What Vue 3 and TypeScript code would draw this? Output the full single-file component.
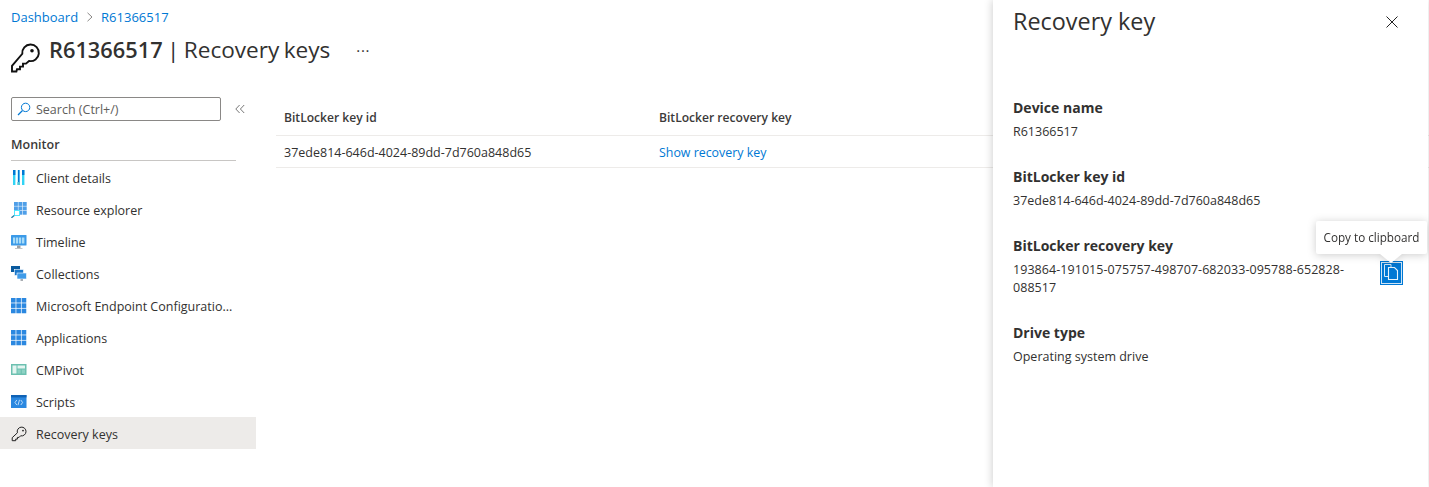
<script setup lang="ts">
const nav: { label: string; icon: string }[] = [
  { label: 'Client details', icon: 'bars' },
  { label: 'Resource explorer', icon: 'explorer' },
  { label: 'Timeline', icon: 'timeline' },
  { label: 'Collections', icon: 'collections' },
  { label: 'Microsoft Endpoint Configuratio...', icon: 'grid' },
  { label: 'Applications', icon: 'grid' },
  { label: 'CMPivot', icon: 'pivot' },
  { label: 'Scripts', icon: 'scripts' },
  { label: 'Recovery keys', icon: 'key' }
]
const gridCells = [0, 5.33, 10.66].flatMap((y) => [0, 5.33, 10.66].map((x) => ({ x, y })))
const explorerCells = [0, 4.4, 8.8].flatMap((y) => [3, 7.4, 11.8].map((x) => ({ x, y })))
</script>

<template>
  <div class="page">
    <header class="head">
      <nav class="crumbs">
        <a>Dashboard</a>
        <svg class="chev" width="8" height="10" viewBox="0 0 8 10"><path d="M1.5 .8 6 5 1.5 9.2" fill="none" stroke="#8a8886" stroke-width="1" /></svg>
        <a>R61366517</a>
      </nav>
      <div class="title-row">
        <svg class="title-key" width="30" height="30" viewBox="0 0 30 30">
          <path d="M11.3 10.8A8.3 8.3 0 1 1 18 18l-3 2.6h-3v3H9v2.6H6l-.6 2.3H1v-5.6z" fill="none" stroke="#111" stroke-width="1.9" />
          <circle cx="21" cy="7.8" r="1.8" fill="#111" />
        </svg>
        <h1><b>R61366517</b> | Recovery keys</h1>
        <span class="more">···</span>
      </div>
    </header>

    <div class="body">
      <aside class="side">
        <div class="search-row">
          <div class="search">
            <svg width="14" height="14" viewBox="0 0 14 14"><circle cx="8.6" cy="5.4" r="4.2" fill="none" stroke="#0078d4" /><path d="M5.5 8.5 1 13" stroke="#0078d4" stroke-width="1.2" /></svg>
            <span>Search (Ctrl+/)</span>
          </div>
          <svg class="collapse" width="10" height="10" viewBox="0 0 10 10"><path d="M4.6 1 .8 5l3.8 4M9.2 1 5.4 5l3.8 4" fill="none" stroke="#777" /></svg>
        </div>
        <div class="group">Monitor</div>
        <ul class="menu">
          <li v-for="item in nav" :key="item.label" :class="{ active: item.icon === 'key' }">
            <svg class="nav-icon" width="16" height="16" viewBox="0 0 16 16">
              <template v-if="item.icon === 'bars'">
                <path d="M2 0h2.4v15H2zM11 0h2.4v15H11z" fill="#32d4f5" />
                <path d="M2 0h2.4v5H2zM11 0h2.4v5H11z" fill="#0078d4" />
                <path d="M6.4 0h2.6v15H6.4z" fill="#9cebff" />
                <path d="M7 0h1.5v12H7z" fill="#0078d4" />
                <path d="M6.4 12H9v3H6.4z" fill="#50c8d8" />
              </template>
              <template v-else-if="item.icon === 'explorer'">
                <rect v-for="(c, i) in explorerCells" :key="i" :x="c.x" :y="c.y" width="3.9" height="3.9" fill="#4f9fe8" />
                <rect x="3.5" y="8.5" width="5" height="5" fill="#fff" stroke="#50e6ff" />
                <path d="M3.2 13.6 .4 15.8" stroke="#1f7fa8" stroke-width="1.3" />
              </template>
              <template v-else-if="item.icon === 'timeline'">
                <rect x="0" y="1" width="15.5" height="10.5" rx=".6" fill="#3b9ae8" />
                <path d="M2 3.5h2.2v6H2zM5 3.5h2.2v6H5zM8 3.5h2.2v6H8zM11 3.5h2.4v6H11z" fill="#a8dcf8" />
                <path d="M6 11.5h3.5V14H6z" fill="#9aa0a6" />
                <path d="M4 14h7.5v1H4z" fill="#c4c4c4" />
              </template>
              <template v-else-if="item.icon === 'collections'">
                <rect x="0" y="0" width="9" height="6" fill="#0a5a9e" />
                <rect x="3.5" y="3.5" width="9" height="6" fill="#1a78cc" stroke="#fff" stroke-width=".6" />
                <rect x="6" y="7" width="9.5" height="6" fill="#3f9be8" stroke="#fff" stroke-width=".6" />
                <path d="M9.5 13H12v2H9.5z" fill="#a8adb2" />
              </template>
              <template v-else-if="item.icon === 'grid'">
                <rect v-for="(c, i) in gridCells" :key="i" :x="c.x" :y="c.y" width="4.6" height="4.6" fill="#2b88e0" />
              </template>
              <template v-else-if="item.icon === 'pivot'">
                <rect x="0" y="2" width="15.5" height="11" fill="#6cc0b0" />
                <rect x="1.5" y="3.5" width="4" height="8" fill="#e4f5f1" />
                <rect x="6.5" y="3.5" width="7.5" height="3" fill="#e4f5f1" />
                <rect x="6.5" y="7.5" width="3.2" height="4" fill="#8ed2c4" />
                <rect x="10.8" y="7.5" width="3.2" height="4" fill="#8ed2c4" />
              </template>
              <template v-else-if="item.icon === 'scripts'">
                <rect x="0" y="1" width="15.5" height="13" fill="#2b88e0" />
                <rect x="0" y="1" width="15.5" height="2.4" fill="#0f62b5" />
                <path d="M5.8 6 4 8.5l1.8 2.5M9.8 6l1.8 2.5L9.8 11M8.5 5.8 7 11.2" fill="none" stroke="#dff0ff" stroke-width=".8" />
              </template>
              <template v-else>
                <path d="M6.4 6.8a4.4 4.4 0 1 1 3.2 3l-1.5 1.6H6.4v1.7H4.7v1.6H1.2v-3z" fill="none" stroke="#222" />
                <circle cx="12" cy="4.6" r=".9" fill="#222" />
              </template>
            </svg>
            <span>{{ item.label }}</span>
          </li>
        </ul>
      </aside>

      <main class="content">
        <div class="t-row t-head">
          <div class="col-a">BitLocker key id</div>
          <div>BitLocker recovery key</div>
        </div>
        <div class="t-row t-data">
          <div class="col-a">37ede814-646d-4024-89dd-7d760a848d65</div>
          <a>Show recovery key</a>
        </div>
      </main>
    </div>

    <section class="panel">
      <div class="panel-head">
        <h2>Recovery key</h2>
        <svg width="12" height="12" viewBox="0 0 12 12"><path d="M.5.5l11 11M11.5.5l-11 11" stroke="#222" fill="none" /></svg>
      </div>
      <div class="field">
        <h3>Device name</h3>
        <p>R61366517</p>
      </div>
      <div class="field">
        <h3>BitLocker key id</h3>
        <p>37ede814-646d-4024-89dd-7d760a848d65</p>
      </div>
      <div class="field">
        <h3>BitLocker recovery key</h3>
        <div class="key-row">
          <p>193864-191015-075757-498707-682033-095788-652828-088517</p>
          <button class="copy" type="button" aria-label="Copy to clipboard">
            <svg width="21" height="22" viewBox="0 0 21 22">
              <path d="M3.5 2.5h6.5v12H3.5z" fill="#0078d4" stroke="#d6e9f8" stroke-width="1" />
              <path d="M7.5 5.5h6l3 3v9h-9z" fill="#0078d4" stroke="#e8f4fc" stroke-width="1.1" />
            </svg>
          </button>
          <div class="tip">Copy to clipboard</div>
        </div>
      </div>
      <div class="field">
        <h3>Drive type</h3>
        <p>Operating system drive</p>
      </div>
    </section>
  </div>
</template>

<style scoped>
.page {
  position: relative;
  width: 1429px;
  height: 487px;
  overflow: hidden;
  background: #fff;
  font-family: "Open Sans", "Noto Sans", sans-serif;
  font-size: 12.5px;
  color: #323130;
}
.head { padding: 9px 0 0 11px; height: 97px; box-sizing: border-box; }
.crumbs { display: flex; align-items: center; gap: 7.5px; height: 15px; color: #0078d4; font-size: 13px; }
.title-row { display: flex; align-items: center; margin-top: 8px; height: 36px; }
.title-key { margin-right: 8px; margin-top: 16px; flex: none; }
h1 { margin: 0; font-size: 22.6px; word-spacing: -1.5px; font-weight: 400; color: #323130; line-height: 36px; white-space: nowrap; }
h1 b { font-weight: 600; font-size: 21.8px; }
.more { margin-left: 26px; font-size: 15px; letter-spacing: 0.6px; color: #323130; margin-top: -1px; }
.body { display: flex; }
.side { width: 256px; flex: none; }
.search-row { display: flex; align-items: center; padding-left: 11px; }
.search {
  box-sizing: border-box;
  width: 210px;
  height: 24px;
  border: 1px solid #8a8886;
  border-radius: 2px;
  display: flex;
  align-items: center;
  gap: 5px;
  padding-left: 5px;
  color: #605e5c;
}
.collapse { margin-left: 14px; }
.group {
  margin: 14px 20px 0 11px;
  height: 26px;
  line-height: 19px;
  border-bottom: 1px solid #c8c6c4;
  font-weight: 600;
  color: #3b3a39;
  box-sizing: border-box;
}
.menu { list-style: none; margin: 0; padding: 0; }
.menu li { display: flex; align-items: center; box-sizing: border-box; height: 32px; padding: 2px 0 0 11px; white-space: nowrap; }
.menu li.active { background: #edebe9; }
.nav-icon { margin-right: 9px; flex: none; }
.content { margin-left: 20px; flex: 1; }
.t-row { display: flex; align-items: center; padding: 2px 0 0 8px; border-bottom: 1px solid #edebe9; box-sizing: border-box; }
.col-a { width: 375px; flex: none; }
.t-head { height: 39px; font-weight: 600; color: #3b3a39; font-size: 12.1px; }
.t-data { height: 32px; }
.t-data a { color: #0078d4; font-size: 12.4px; }
.panel {
  position: absolute;
  top: 0;
  left: 993px;
  width: 435px;
  height: 487px;
  box-sizing: border-box;
  padding: 0 20px;
  background: #fff;
  box-shadow: -1px 0 8px rgba(0, 0, 0, .18);
}
.panel-head { display: flex; justify-content: space-between; align-items: center; height: 44px; padding-right: 10px; margin-bottom: 54px; }
h2 { margin: -2px 0 0; font-size: 23.4px; font-weight: 500; color: #323130; }
.field { margin-bottom: 26px; }
h3 { margin: 0 0 5px; font-size: 14px; line-height: 20px; font-weight: 700; color: #323130; }
p { margin: 0; line-height: 18px; }
.key-row { position: relative; display: flex; align-items: flex-start; }
.key-row p { width: 338px; letter-spacing: .055px; }
.copy {
  position: absolute;
  left: 367px;
  top: 0;
  width: 23px;
  height: 24px;
  padding: 0;
  border: 1px solid #0078d4;
  outline: 1px solid #cfe4f5;
  outline-offset: -2px;
  background: #0078d4;
  display: flex;
  align-items: center;
  justify-content: center;
}
.tip {
  position: absolute;
  left: 303px;
  top: -40px;
  width: 111px;
  height: 33px;
  line-height: 33px;
  text-align: center;
  font-size: 11.7px;
  background: #fff;
  filter: drop-shadow(0 1px 4px rgba(0, 0, 0, .2));
  border-radius: 2px;
  white-space: nowrap;
}
.tip::after {
  content: "";
  position: absolute;
  left: 64px;
  bottom: -9px;
  width: 0;
  height: 0;
  border-left: 11.5px solid transparent;
  border-right: 11.5px solid transparent;
  border-top: 9px solid #fff;
}
</style>
